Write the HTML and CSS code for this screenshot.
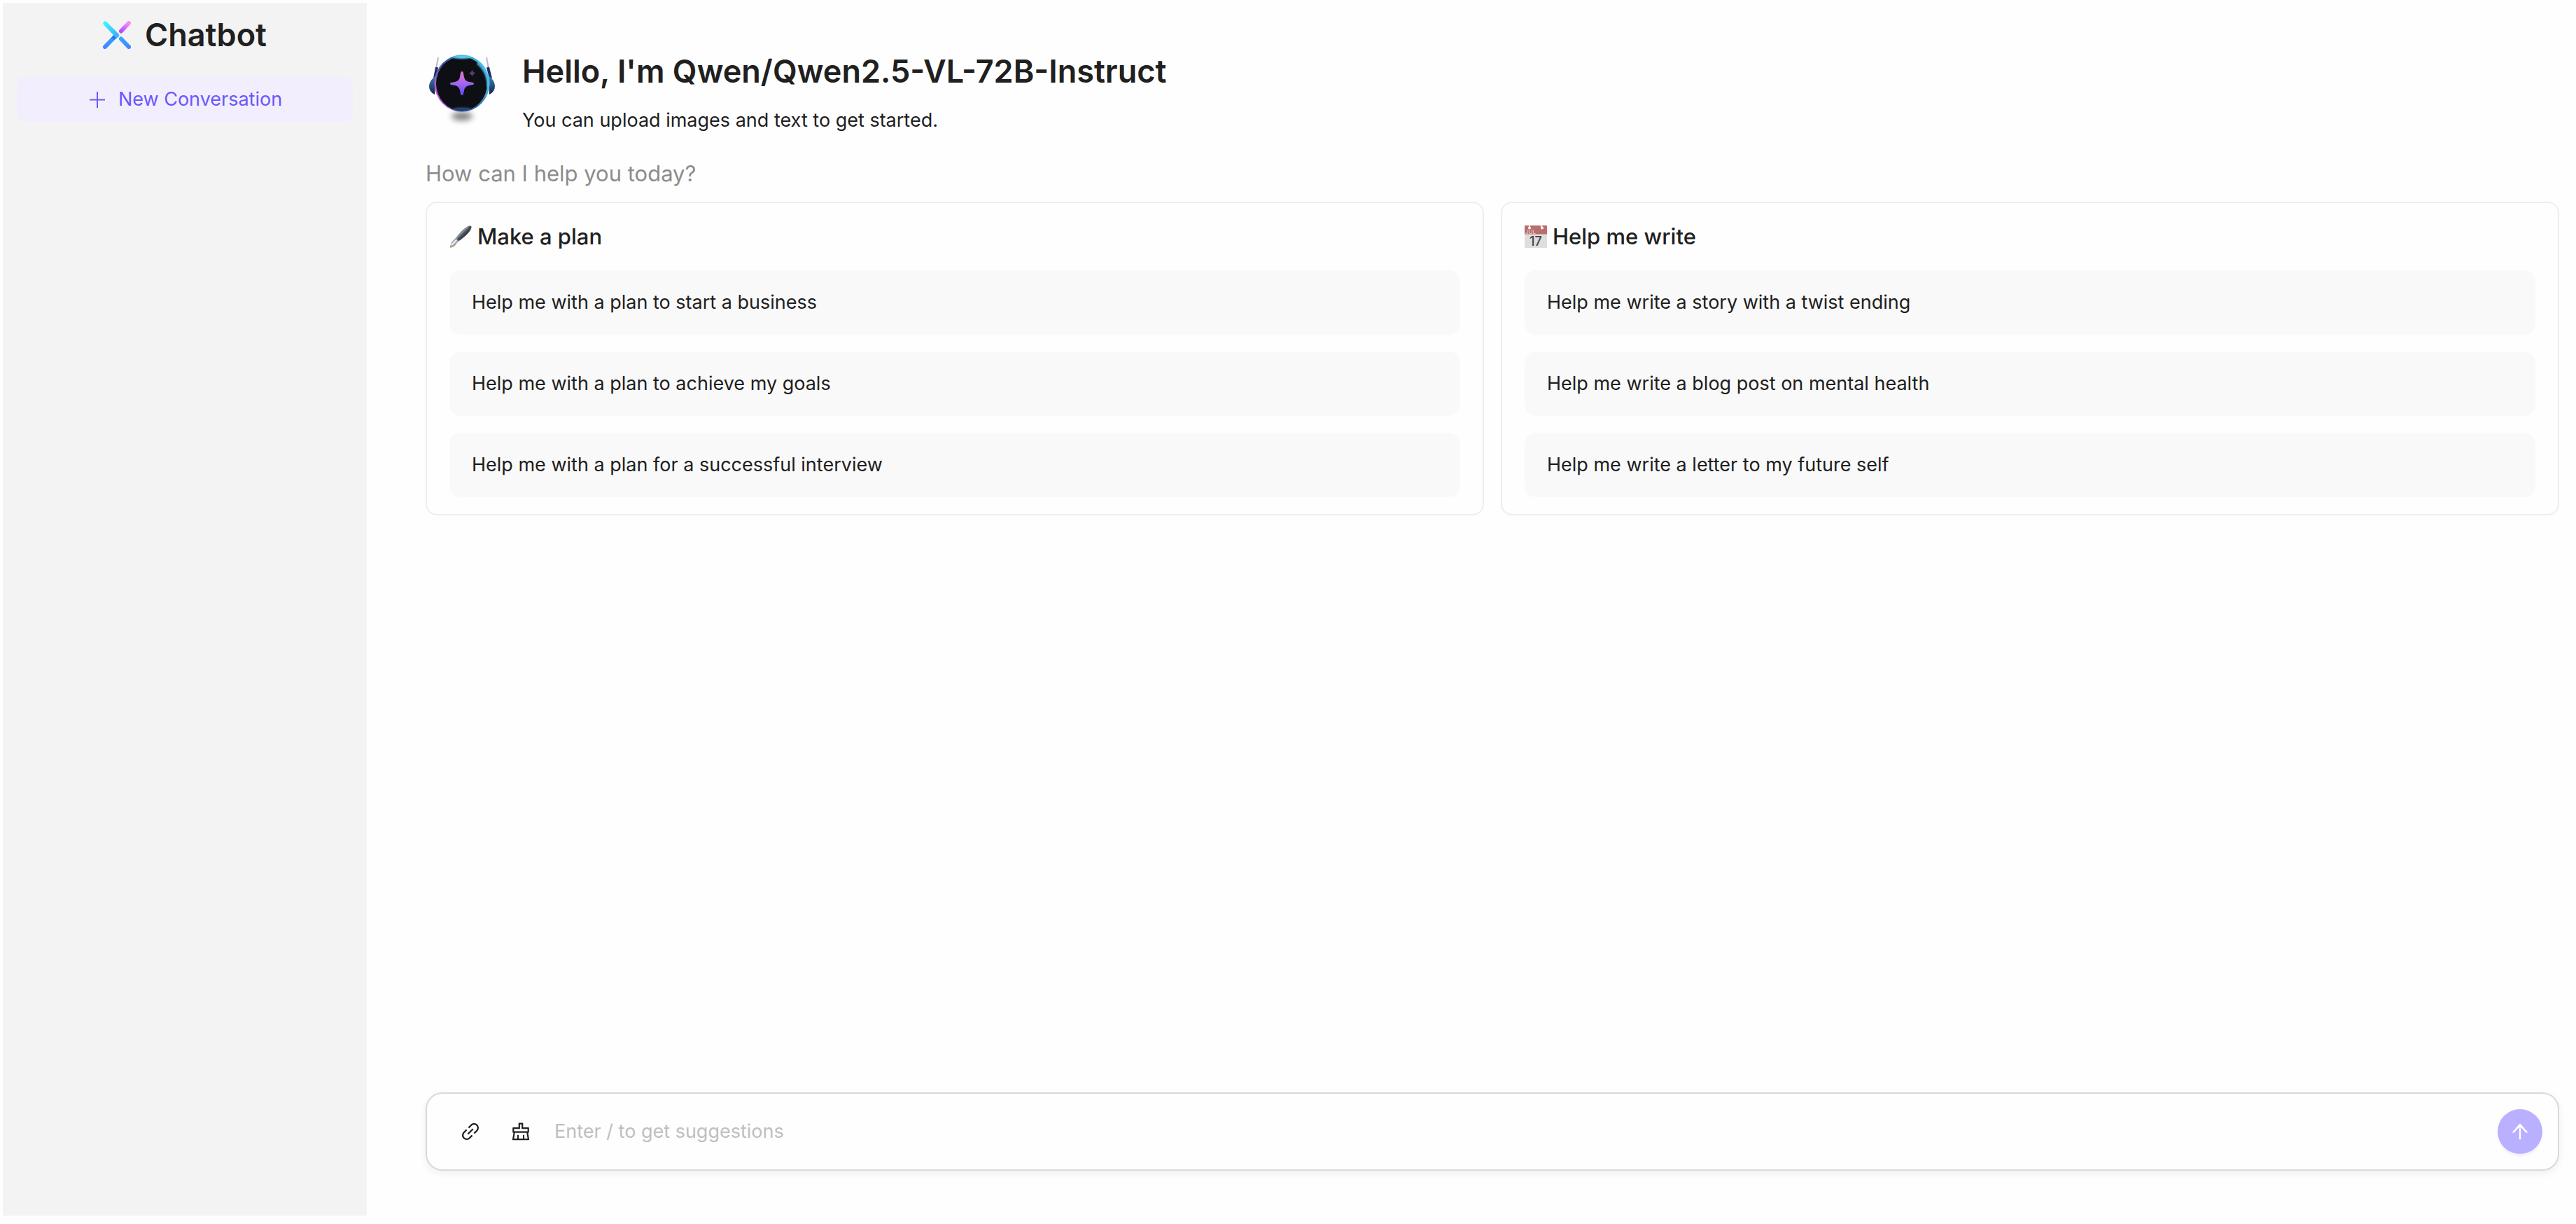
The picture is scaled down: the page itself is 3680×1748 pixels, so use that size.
FILE: index.html
```html
<!DOCTYPE html>
<html lang="en">
<head>
<meta charset="utf-8">
<meta name="viewport" content="width=device-width, initial-scale=1">
<title>Chatbot</title>
<link rel="stylesheet" href="styles.css">
</head>
<body>
<div class="app">
  <aside class="sidebar">
    <div class="brand">
      <svg class="brand-logo" viewBox="0 0 40 40" fill="none" stroke-linecap="round" stroke-width="6" aria-hidden="true">
        <defs>
          <linearGradient id="cyan" gradientUnits="userSpaceOnUse" x1="3" y1="3" x2="22" y2="24"><stop stop-color="#3cf4ff"/><stop offset="1" stop-color="#38a8fb"/></linearGradient>
          <linearGradient id="pink" gradientUnits="userSpaceOnUse" x1="37" y1="3" x2="26" y2="15"><stop stop-color="#ff8cf6"/><stop offset="1" stop-color="#b04dff"/></linearGradient>
          <linearGradient id="blue" gradientUnits="userSpaceOnUse" x1="18" y1="21" x2="3" y2="37"><stop stop-color="#0a50d8"/><stop offset=".35" stop-color="#379aff"/><stop offset="1" stop-color="#4187ff"/></linearGradient>
          <linearGradient id="sky" gradientUnits="userSpaceOnUse" x1="26" y1="26" x2="37" y2="37"><stop stop-color="#37a4fc"/><stop offset="1" stop-color="#4287ff"/></linearGradient>
        </defs>
        <path d="M3 37 17 22.500" stroke="url(#blue)"/>
        <path d="M.900 5.100A3 3 0 0 1 5.100.900L22.500 18.500Q24 20 22.500 22L19 25.500 15 20Z" fill="url(#cyan)"/>
        <path d="M37 3 26 14.500" stroke="url(#pink)"/>
        <path d="M26 25.500 37 37" stroke="url(#sky)"/>
      </svg>
      <span class="brand-name">Chatbot</span>
    </div>
    <button class="new-chat" type="button">
      <svg class="icon" viewBox="0 0 28 28" fill="none" stroke="currentColor" stroke-width="2" aria-hidden="true"><path d="M14 3v23M3 14.500h22"/></svg>
      New Conversation
    </button>
  </aside>

  <main class="main">
    <header class="welcome">
      <svg class="avatar" viewBox="0 0 120 120" aria-hidden="true">
        <defs>
          <linearGradient id="rim" x1="0" y1=".7" x2="1" y2=".3"><stop stop-color="#d85cf0"/><stop offset=".3" stop-color="#3d4f9c"/><stop offset=".6" stop-color="#2f6fb0"/><stop offset="1" stop-color="#4fd0f5"/></linearGradient>
          <linearGradient id="star" x1="0" y1="0" x2="0" y2="1"><stop stop-color="#e27cc4"/><stop offset=".5" stop-color="#a565ee"/><stop offset="1" stop-color="#5b4cf5"/></linearGradient>
          <linearGradient id="ear" x1="0" y1="0" x2="0" y2="1"><stop stop-color="#3d86ad"/><stop offset="1" stop-color="#12234f"/></linearGradient>
          <filter id="soft" x="-50%" y="-100%" width="200%" height="300%"><feGaussianBlur stdDeviation="4"/></filter>
          <filter id="glow" x="-20%" y="-50%" width="140%" height="200%"><feGaussianBlur stdDeviation="1"/></filter>
        </defs>
        <ellipse cx="60" cy="96" rx="15" ry="6" fill="#000" opacity=".5" filter="url(#soft)"/>
        <path d="M26 12 23 28M95 12l3 16" stroke="#b9b9cc" stroke-width="2"/>
        <path d="M24 26 21 42M97 26l4 16" stroke="#20305e" stroke-width="4"/>
        <path d="M23 38Q13 45 13 53T21 65ZM98 38Q107 45 107 53T99 65Z" fill="url(#ear)"/>
        <ellipse cx="60" cy="49" rx="39.500" ry="40.500" fill="url(#rim)"/>
        <ellipse cx="59.500" cy="49.500" rx="36.500" ry="38.500" fill="#0d0f14"/>
        <path d="M82 20Q98 34 97 54" fill="none" stroke="#48b8e8" stroke-width="3" filter="url(#glow)"/>
        <ellipse cx="60" cy="11.500" rx="13" ry="2.500" fill="#5cd5f5" filter="url(#glow)"/>
        <ellipse cx="60" cy="85.500" rx="13" ry="2" fill="#294f80" filter="url(#glow)"/>
        <path d="M60 32C62 32 62 35 63 40 64 44 66 46 70 47 75 48 77 48 77 49.500S75 51 70 52C66 53 64 55 63 59 62 64 62 66 60 66S58 64 57 59C56 55 54 53 50 52 45 51 43 51 43 49.500S45 48 50 47C54 46 56 44 57 40 58 35 58 32 60 32Z" fill="url(#star)"/>
        <path d="M74.500 29.500Q75.500 33.500 79.500 34.500 75.500 35.500 74.500 39.500 73.500 35.500 69.500 34.500 73.500 33.500 74.500 29.500Z" fill="#5a3c6c"/>
      </svg>
      <div class="welcome-text">
        <h1 class="welcome-title">Hello, I'm Qwen/Qwen2.5-VL-72B-Instruct</h1>
        <p class="welcome-copy">You can upload images and text to get started.</p>
      </div>
    </header>

    <section class="prompts">
      <h2 class="prompts-title">How can I help you today?</h2>
      <div class="cards">
        <section class="card">
          <h3 class="card-title">
            <svg class="emoji" viewBox="0 0 32 32" aria-hidden="true">
              <defs><linearGradient id="pen" gradientUnits="userSpaceOnUse" x1="15" y1="9" x2="21" y2="15"><stop stop-color="#5b6068"/><stop offset=".35" stop-color="#9299a2"/><stop offset=".6" stop-color="#4e535b"/><stop offset="1" stop-color="#3a3d44"/></linearGradient></defs>
              <path d="M9 18Q17 7 25.500 1.500C29-.500 32 0 31.500 3 30 9 22 16.500 13 22.500Q9 22 9 18Z" fill="url(#pen)"/>
              <path d="M9 17.500 13.500 22.500 9 27 3 31.500.500 31 3 24Z" fill="#a3acb6"/>
              <path d="M3 28 10 21" stroke="#eef2f5" stroke-width="2"/>
              <path d="M1 31 6 29.500 9 26.500" fill="none" stroke="#b79a80" stroke-width="1.500"/>
            </svg>
            Make a plan
          </h3>
          <div class="options">
            <button class="option" type="button">Help me with a plan to start a business</button>
            <button class="option" type="button">Help me with a plan to achieve my goals</button>
            <button class="option" type="button">Help me with a plan for a successful interview</button>
          </div>
        </section>
        <section class="card">
          <h3 class="card-title">
            <svg class="emoji" viewBox="0 0 32 32" aria-hidden="true">
              <path d="M0 12h32v20H0z" fill="#dedede"/>
              <path d="M0 0h32v12.500H0z" fill="#b96d6d"/>
              <circle cx="7" cy="3.500" r="2" fill="#fff"/><circle cx="25" cy="3.500" r="2" fill="#fff"/>
              <path d="M7 0v3M23 0l2 3" stroke="#fff" stroke-width="1.500"/>
              <text class="cal-month" x="1" y="11.500">JUL</text>
              <text class="cal-day" x="16" y="29" text-anchor="middle">17</text>
            </svg>
            Help me write
          </h3>
          <div class="options">
            <button class="option" type="button">Help me write a story with a twist ending</button>
            <button class="option" type="button">Help me write a blog post on mental health</button>
            <button class="option" type="button">Help me write a letter to my future self</button>
          </div>
        </section>
      </div>
    </section>

    <form class="composer">
      <button class="tool" type="button" aria-label="Attach">
        <svg class="icon" viewBox="64 64 896 896" fill="currentColor" aria-hidden="true"><path d="M574 665.4a8.03 8.03 0 00-11.3 0L446.5 781.6c-53.8 53.8-144.6 59.5-204 0-59.5-59.5-53.8-150.2 0-204l116.2-116.2c3.1-3.1 3.1-8.2 0-11.3l-39.8-39.8a8.03 8.03 0 00-11.3 0L191.4 526.5c-84.6 84.6-84.6 221.5 0 306s221.5 84.6 306 0l116.2-116.2c3.1-3.1 3.1-8.2 0-11.3L574 665.4zm258.6-474c-84.6-84.6-221.5-84.6-306 0L410.3 307.6a8.03 8.03 0 000 11.3l39.7 39.7c3.1 3.1 8.2 3.1 11.3 0l116.2-116.2c53.8-53.8 144.6-59.5 204 0 59.5 59.5 53.8 150.2 0 204L665.3 562.6a8.03 8.03 0 000 11.3l39.8 39.8c3.1 3.1 8.2 3.1 11.3 0l116.2-116.2c84.5-84.6 84.5-221.5 0-306.1zM610.1 372.3a8.03 8.03 0 00-11.3 0L372.3 598.7a8.03 8.03 0 000 11.3l39.6 39.6c3.1 3.1 8.2 3.1 11.3 0l226.4-226.4c3.1-3.1 3.1-8.2 0-11.3l-39.5-39.6z"/></svg>
      </button>
      <button class="tool" type="button" aria-label="Clear">
        <svg class="icon" viewBox="64 64 896 896" fill="currentColor" fill-rule="evenodd" aria-hidden="true"><path d="M899.1 869.6l-53-305.6H864c14.4 0 26-11.6 26-26V346c0-14.4-11.6-26-26-26H618V138c0-14.4-11.6-26-26-26H432c-14.4 0-26 11.6-26 26v182H160c-14.4 0-26 11.6-26 26v192c0 14.4 11.6 26 26 26h17.9l-53 305.6a25.95 25.95 0 0025.6 30.4h723c1.5 0 3-.1 4.4-.4a25.88 25.88 0 0021.2-30zM204 390h272V182h72v208h272v104H204V390zm468 440V674c0-4.4-3.6-8-8-8h-48c-4.4 0-8 3.6-8 8v156H416V674c0-4.4-3.6-8-8-8h-48c-4.4 0-8 3.6-8 8v156H202.8l45.1-260H776l45.1 260H672z"/></svg>
      </button>
      <input class="prompt-input" type="text" aria-label="Message" placeholder="Enter / to get suggestions">
      <button class="send" type="submit" aria-label="Send">
        <svg class="icon" viewBox="64 64 896 896" fill="currentColor" aria-hidden="true"><path d="M868 545.5L536.1 163a31.96 31.96 0 00-48.3 0L156 545.5a7.97 7.97 0 006 13.2h81c4.6 0 9-2 12.1-5.5L474 300.9V864c0 4.4 3.6 8 8 8h60c4.4 0 8-3.6 8-8V300.9l218.9 252.3c3 3.5 7.4 5.5 12.1 5.5h81c6.8 0 10.5-8 6-13.2z"/></svg>
      </button>
    </form>
  </main>
</div>
</body>
</html>
```

FILE: styles.css
```css
* {
  box-sizing: border-box;
}

body {
  margin: 0;
  background: #fefefe;
  color: #202020;
  font-family: Inter, "Liberation Sans", sans-serif;
  font-size: 27px;
  line-height: 44px;
}

h1, h2, h3, p {
  margin: 0;
}

button, input {
  border: 0;
  margin: 0;
  font: inherit;
  color: inherit;
}

.app {
  display: flex;
  min-height: 100vh;
  padding: 4px 24px 12px 4px;
  gap: 84px;
}

/* Sidebar */
.sidebar {
  display: flex;
  flex: 0 0 520px;
  flex-direction: column;
  gap: 24px;
  padding: 10px 20px;
  background: #f3f3f3;
}

.brand {
  display: flex;
  align-items: center;
  justify-content: center;
  gap: 20px;
  height: 72px;
}

.brand-logo {
  width: 40px;
  height: 40px;
}

.brand-name {
  font-size: 45px;
  font-weight: 600;
  line-height: 72px;
}

.new-chat {
  display: flex;
  align-items: center;
  justify-content: center;
  gap: 16px;
  padding: 10px;
  border-radius: 12px;
  background: #f2eefe;
  color: #6a57fb;
}

.icon {
  display: block;
  width: 28px;
  height: 28px;
}

/* Main column */
.main {
  display: flex;
  flex: 1;
  flex-direction: column;
  gap: 30px;
  min-width: 0;
  padding: 66px 0 64px;
}

.welcome {
  display: flex;
  gap: 26px;
  margin-left: -8px;
}

.avatar {
  flex: none;
  width: 120px;
  height: 120px;
}

.welcome-title {
  font-size: 45px;
  font-weight: 600;
  line-height: 64px;
}

.welcome-copy {
  margin-top: 16px;
}

.prompts-title {
  margin-bottom: 16px;
  color: #8c8c8c;
  font-size: 31px;
  font-weight: 400;
  line-height: 48px;
}

.cards {
  display: grid;
  grid-template-columns: 1fr 1fr;
  gap: 24px;
}

.card {
  padding: 24px 32px;
  border: 2px solid #eee;
  border-radius: 16px;
}

.card-title {
  display: flex;
  align-items: center;
  gap: 8px;
  margin-bottom: 24px;
  font-size: 31px;
  font-weight: 500;
  line-height: 48px;
}

.emoji {
  width: 32px;
  height: 32px;
}

.cal-month {
  fill: #e3c4c4;
  font-size: 8px;
}

.cal-day {
  fill: #444;
  font-size: 18px;
}

.options {
  display: flex;
  flex-direction: column;
  gap: 24px;
}

.option {
  padding: 24px 32px;
  border-radius: 16px;
  background: #f9f9f9;
  text-align: left;
}

/* Message composer */
.composer {
  display: flex;
  align-items: center;
  gap: 8px;
  margin-top: auto;
  padding: 22px 22px 22px 30px;
  border: 2px solid #d9d9d9;
  border-radius: 24px;
  background: #fefefe;
  box-shadow: 0 4px 12px rgba(0, 0, 0, 0.06);
}

.tool {
  display: grid;
  place-items: center;
  width: 64px;
  height: 64px;
  border-radius: 12px;
  background: none;
}

.prompt-input {
  flex: 1;
  min-width: 0;
  padding: 0 8px;
  outline: 0;
  background: none;
}

.prompt-input::placeholder {
  color: #bfbfbf;
  opacity: 1;
}

.send {
  display: grid;
  place-items: center;
  width: 64px;
  height: 64px;
  border-radius: 50%;
  background: #b9b0ff;
  box-shadow: 0 4px 0 rgba(185, 176, 255, 0.12);
  color: #fff;
}
```
